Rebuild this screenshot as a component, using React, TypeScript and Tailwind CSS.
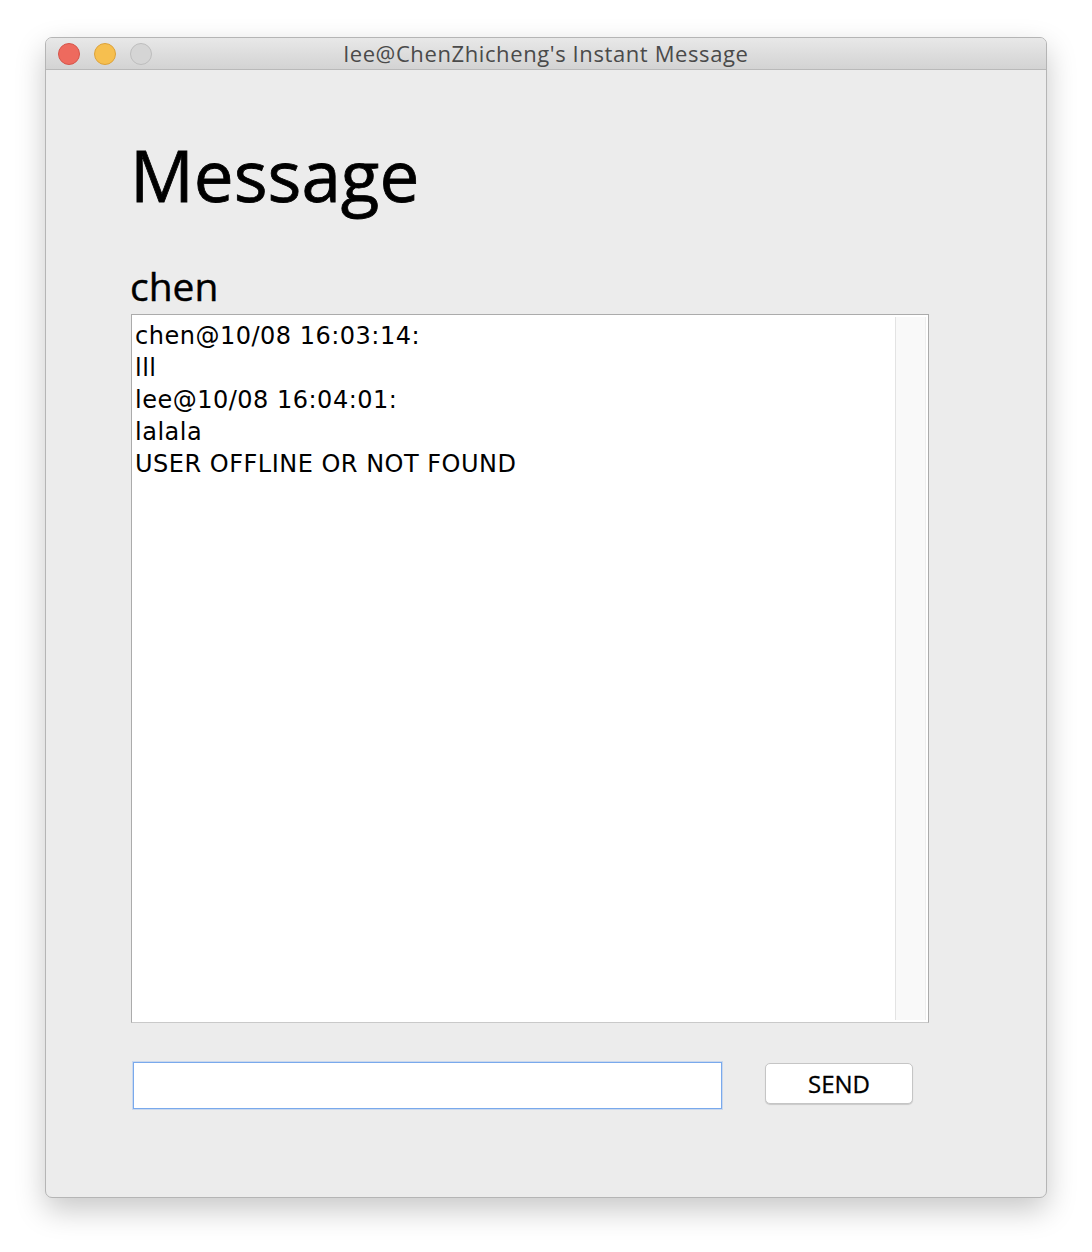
import React from "react";

export default function App() {
  const font = { fontFamily: '"Open Sans", "DejaVu Sans", sans-serif' };
  const dv = { fontFamily: '"DejaVu Sans", sans-serif' };
  return (
    <div className="w-[1092px] h-[1252px] bg-white pt-[37px] pl-[45px]" style={font}>
      <div className="w-[1002px] h-[1161px] rounded-[7px] border border-[#b5b5b5] bg-[#ececec] shadow-[0_12px_30px_rgba(0,0,0,0.22)] flex flex-col overflow-hidden">
        <div className="h-[32px] shrink-0 bg-gradient-to-b from-[#e8e8e8] to-[#d3d3d3] border-b border-[#b9b9b9] flex items-center relative">
          <div className="flex items-center gap-[14px] pl-[12px]">
            <div className="w-[22px] h-[22px] rounded-full bg-[#ee6a5e] border border-[#d5544a]" />
            <div className="w-[22px] h-[22px] rounded-full bg-[#f6bf4f] border border-[#dca23a]" />
            <div className="w-[22px] h-[22px] rounded-full bg-[#d5d5d5] border border-[#bdbdbd]" />
          </div>
          <div className="absolute inset-0 flex items-center justify-center text-[22px] tracking-[0.6px] text-[#4a4a4a]">
            lee@ChenZhicheng's Instant Message
          </div>
        </div>
        <div className="pl-[85px] pr-[117px] flex flex-col">
          <div className="mt-[60px] -ml-[1px] text-[71px] leading-[90px] text-black [-webkit-text-stroke:0.8px_black]">Message</div>
          <div className="mt-[46px] -ml-[1px] text-[39px] leading-[40px] text-black [-webkit-text-stroke:0.4px_black]">chen</div>
          <div className="mt-[8px] h-[709px] border border-[#ababab] border-b-[#c9c9c9] bg-white flex">
            <div className="flex-1 pl-[3px] pt-[5px] text-[24px] leading-[32px] tracking-[0.5px] text-black" style={dv}>
              <div>chen@10/08 16:03:14:</div>
              <div>lll</div>
              <div>lee@10/08 16:04:01:</div>
              <div>lalala</div>
              <div>USER OFFLINE OR NOT FOUND</div>
            </div>
            <div className="w-[31px] my-[2px] mr-[2px] bg-[#f9f9f9] border-l border-[#e3e3e3] border-r border-r-[#eeeeee]" />
          </div>
          <div className="mt-[39px] flex items-start pl-[2px]">
            <div className="w-[589px] h-[47px] bg-white border border-[#79a9ec] shadow-[0_0_0_1px_rgba(140,180,240,0.35)]" />
            <button className="ml-[43px] mt-[1px] w-[148px] h-[41px] rounded-[5px] bg-white border border-[#c5c5c5] shadow-[0_1px_1px_rgba(0,0,0,0.15)] text-[24px] text-black [-webkit-text-stroke:0.3px_black]">
              SEND
            </button>
          </div>
        </div>
      </div>
    </div>
  );
}
